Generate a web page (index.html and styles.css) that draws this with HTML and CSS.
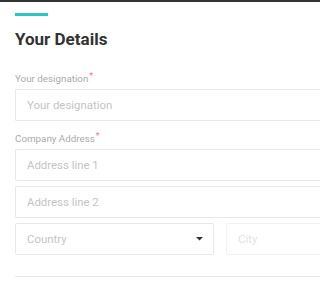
FILE: index.html
```html
<!DOCTYPE html>
<html>
<head>
<meta charset="utf-8">
<link rel="stylesheet" href="styles.css">
</head>
<body>
<div class="page">
  <div class="accent"></div>
  <h1 class="title">Your Details</h1>
  <div class="field first">
    <label class="label">Your designation<span class="req">*</span></label>
    <input class="input" type="text" placeholder="Your designation">
  </div>
  <div class="field">
    <label class="label">Company Address<span class="req">*</span></label>
    <div class="stack">
      <input class="input" type="text" placeholder="Address line 1">
      <input class="input" type="text" placeholder="Address line 2">
      <div class="row">
        <div class="select">
          <span class="select-text">Country</span>
          <svg class="caret" width="7" height="4" viewBox="0 0 7 4"><path d="M0 0h7L3.5 3.6z" fill="#333"/></svg>
        </div>
        <input class="input city" type="text" placeholder="City" disabled>
      </div>
    </div>
  </div>
  <div class="divider"></div>
</div>
</body>
</html>
```
FILE: styles.css
```css
html, body {
  margin: 0;
  padding: 0;
  background: #fff;
  overflow: hidden;
}
body {
  border-top: 2px solid #333;
  font-family: Roboto, "Liberation Sans", sans-serif;
}
.page {
  padding: 11px 0 0 15px;
}
.accent {
  width: 33px;
  height: 3px;
  background: #2ec4c6;
}
.title {
  margin: 13px 0 0;
  font-size: 17px;
  line-height: 20px;
  font-weight: 700;
  color: #333;
}
.field.first {
  margin-top: 23px;
}
.field + .field {
  margin-top: 11px;
}
.label {
  display: block;
  font-size: 9.8px;
  line-height: 13px;
  color: #aaa;
  margin-bottom: 4px;
}
.req {
  color: #f08080;
  font-size: 9px;
  vertical-align: top;
  position: relative;
  top: -2px;
  margin-left: 1px;
}
.input {
  display: block;
  box-sizing: border-box;
  width: 100%;
  height: 32px;
  border: 1px solid #e8e8e8;
  border-right: none;
  border-radius: 2px 0 0 2px;
  padding: 0 11px;
  font-family: inherit;
  font-size: 11.4px;
  color: #333;
  background: #fff;
  outline: none;
}
.input::placeholder {
  color: #c4c4c4;
}
.stack {
  display: flex;
  flex-direction: column;
  gap: 5px;
}
.row {
  display: flex;
  gap: 12px;
}
.select {
  box-sizing: border-box;
  width: 199px;
  flex: none;
  height: 32px;
  border: 1px solid #e8e8e8;
  border-radius: 2px;
  padding: 0 10px 0 11px;
  display: flex;
  align-items: center;
  justify-content: space-between;
}
.select-text {
  font-size: 11.4px;
  color: #c4c4c4;
}
.city {
  flex: 1;
  min-width: 0;
  border-color: #f2f2f2;
}
.city::placeholder {
  color: #e2e2e2;
}
.divider {
  margin-top: 21px;
  height: 1px;
  background: #e8e8e8;
}
```
